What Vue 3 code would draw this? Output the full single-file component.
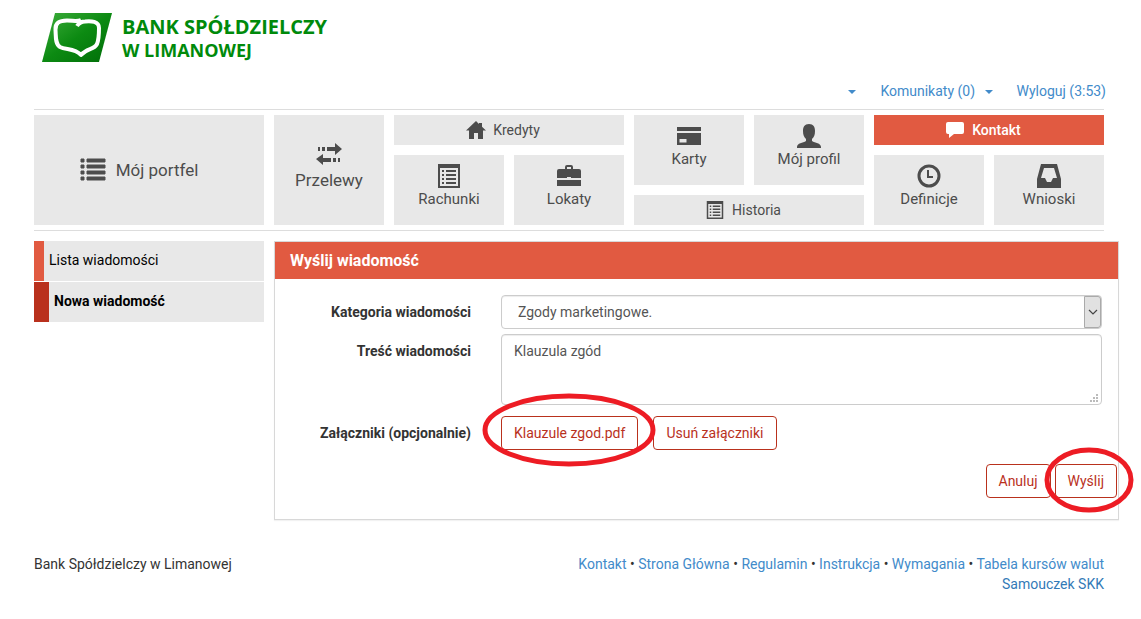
<script setup>
import { ref } from 'vue'

const category = ref('Zgody marketingowe.')
const message = ref('Klauzula zgód')

const tiles = [
  { label: 'Mój portfel', icon: 'list', kind: 'large', area: 'wallet' },
  { label: 'Przelewy', icon: 'transfer', kind: 'tall', area: 'transfers' },
  { label: 'Kredyty', icon: 'home', kind: 'wide', area: 'loans' },
  { label: 'Rachunki', icon: 'sheet', kind: 'small', area: 'accounts' },
  { label: 'Lokaty', icon: 'case', kind: 'small', area: 'deposits' },
  { label: 'Karty', icon: 'card', kind: 'small', area: 'cards' },
  { label: 'Mój profil', icon: 'user', kind: 'small', area: 'profile' },
  { label: 'Historia', icon: 'sheet', kind: 'wide', area: 'history' },
  { label: 'Kontakt', icon: 'comment', kind: 'wide', area: 'contact', active: true },
  { label: 'Definicje', icon: 'clock', kind: 'small', area: 'definitions' },
  { label: 'Wnioski', icon: 'inbox', kind: 'small', area: 'requests' }
]

const footerLinks = ['Kontakt', 'Strona Główna', 'Regulamin', 'Instrukcja', 'Wymagania', 'Tabela kursów walut']
</script>

<template>
  <div class="page">
    <header>
      <a class="logo" href="#">
        <svg class="logo-mark" viewBox="0 0 70 49" aria-hidden="true">
          <defs>
            <linearGradient id="leaf" x1="0" y1="0" x2="1" y2="1">
              <stop offset="0" stop-color="#3fae3c" />
              <stop offset="0.5" stop-color="#0c8a12" />
              <stop offset="1" stop-color="#006d08" />
            </linearGradient>
          </defs>
          <path d="M13 0H70L57 49H0Z" fill="url(#leaf)" />
          <path d="M39 7C35 9 31 7.500 25 7.500C17 7.500 13 10 13.500 17C14 23 13 31 18 34C24 37 33 35 39 42C45 35 52 37 55 31C57 26 57 20 57 15C57 8 49 8 43 8.500C39 8.500 37 10 35 13" fill="none" stroke="#fff" stroke-width="4" stroke-linejoin="round" />
        </svg>
        <span class="logo-text">
          <span class="logo-top">BANK SPÓŁDZIELCZY</span>
          <span class="logo-bottom">W LIMANOWEJ</span>
        </span>
      </a>
      <nav class="session">
        <a href="#" aria-label="Konto"><i class="caret"></i></a>
        <a href="#">Komunikaty (0) <i class="caret"></i></a>
        <a href="#">Wyloguj (3:53)</a>
      </nav>
    </header>

    <nav class="tiles">
      <a v-for="t in tiles" :key="t.label" href="#" class="tile" :class="[t.kind, t.area, { active: t.active }]">
        <svg v-if="t.icon === 'list'" class="icon" viewBox="0 0 26 24">
          <path d="M1 1h3v3H1zM1 7h3v3H1zM1 13h3v3H1zM1 19h3v3H1zM7 1h18v3H7zM7 7h18v3H7zM7 13h18v3H7zM7 19h18v3H7z" stroke="currentColor" stroke-width="1" stroke-linejoin="round" />
        </svg>
        <svg v-else-if="t.icon === 'transfer'" class="icon" viewBox="0 0 26 24">
          <path d="M2 5h2v4H2zM6 5h3v4H6zM11 5h8V1l7 6-7 6V9h-8zM7 12v4h8v4H7v3L0 17zM17 16h3v4h-3zM22 16h2v4h-2z" />
        </svg>
        <svg v-else-if="t.icon === 'home'" class="icon" viewBox="0 0 20 18">
          <path d="M10 0L0 9.500H3V18H8V12H12V18H17V9.500H20L16 5.700V2H13V3Z" />
        </svg>
        <svg v-else-if="t.icon === 'card'" class="icon" viewBox="0 0 24 24">
          <path d="M0 3h24v4H0zM0 9h24v12H0zM2.500 15v3.500h7V15z" fill-rule="evenodd" />
        </svg>
        <svg v-else-if="t.icon === 'user'" class="icon" viewBox="0 0 24 24">
          <path d="M12 0C7.500 0 6 3 6 7c0 4 1 6 3 8v2C6 19 0 19 0 23v1h24v-1c0-4-6-4-9-6v-2c2-2 3-4 3-8 0-4-1.500-7-6-7Z" />
        </svg>
        <svg v-else-if="t.icon === 'comment'" class="icon" viewBox="0 0 20 18">
          <path d="M3 1h14q2 0 2 2v8q0 2-2 2H9l-5 4v-4H3q-2 0-2-2V3q0-2 2-2Z" />
        </svg>
        <svg v-else-if="t.icon === 'sheet'" class="icon" viewBox="0 0 22 24">
          <path d="M0 0h22v24H0zM2 4v18h18V4z" fill-rule="evenodd" />
          <path d="M4 6h2v2H4zM4 10h2v2H4zM4 14h2v2H4zM4 18h2v2H4zM8 6h10v2H8zM8 10h10v2H8zM8 14h10v2H8zM8 18h10v2H8z" />
        </svg>
        <svg v-else-if="t.icon === 'case'" class="icon" viewBox="0 0 24 24">
          <path d="M8 5V3q0-2 2-2h4q2 0 2 2v2h6q2 0 2 2v7H14v-1h-4v1H0V7q0-2 2-2ZM10 5h4V3h-4ZM0 16h24v6H0z" fill-rule="evenodd" />
        </svg>
        <svg v-else-if="t.icon === 'clock'" class="icon" viewBox="0 0 24 24">
          <circle cx="12" cy="12" r="10" fill="none" stroke="currentColor" stroke-width="3" />
          <path d="M10 6h2v6h4v2h-6z" />
        </svg>
        <svg v-else class="icon" viewBox="0 0 24 24">
          <path d="M4 0h16l4 15v9H0v-9ZM7 4L4 14h4l2 4h4l2-4h4L17 4Z" fill-rule="evenodd" />
        </svg>
        <span>{{ t.label }}</span>
      </a>
    </nav>

    <div class="main">
      <nav class="side">
        <a href="#">Lista wiadomości</a>
        <a href="#" class="current">Nowa wiadomość</a>
      </nav>

      <section class="panel">
        <h1>Wyślij wiadomość</h1>
        <form @submit.prevent>
          <div class="row">
            <label for="category">Kategoria wiadomości</label>
            <div class="field">
              <select id="category" v-model="category" class="control">
                <option>Zgody marketingowe.</option>
              </select>
              <span class="drop" aria-hidden="true">
                <svg viewBox="0 0 10 6"><path d="M1 1l4 4 4-4" fill="none" stroke="#444" stroke-width="1.200" /></svg>
              </span>
            </div>
          </div>
          <div class="row">
            <label for="message">Treść wiadomości</label>
            <div class="field">
              <textarea id="message" v-model="message" class="control"></textarea>
              <svg class="grip" viewBox="0 0 8 8" aria-hidden="true">
                <path d="M6 0h2v2H6zM3 3h2v2H3zM6 3h2v2H6zM0 6h2v2H0zM3 6h2v2H3zM6 6h2v2H6z" />
              </svg>
            </div>
          </div>
          <div class="row files">
            <label for="attachment">Załączniki (opcjonalnie)</label>
            <div class="buttons">
              <span class="marked">
                <button id="attachment" type="button">Klauzule zgod.pdf</button>
                <svg class="ring ring-file" viewBox="0 0 174 74" aria-hidden="true"><ellipse cx="87" cy="37" rx="84" ry="34" /></svg>
              </span>
              <button type="button">Usuń załączniki</button>
            </div>
          </div>
          <div class="actions">
            <button type="button">Anuluj</button>
            <span class="marked">
              <button type="submit">Wyślij</button>
              <svg class="ring ring-send" viewBox="0 0 90 66" aria-hidden="true"><ellipse cx="45" cy="33" rx="42" ry="30" /></svg>
            </span>
          </div>
        </form>
      </section>
    </div>

    <footer>
      <span>Bank Spółdzielczy w Limanowej</span>
      <div class="links">
        <div><template v-for="(l, i) in footerLinks" :key="l"><template v-if="i"> • </template><a href="#">{{ l }}</a></template></div>
        <a href="#" class="guide">Samouczek SKK</a>
      </div>
    </footer>
  </div>
</template>

<style>
body { background: #fff; }
</style>

<style scoped>
* { box-sizing: border-box; }
.page {
  padding: 13px 37px 24px 34px;
  font: 14px/20px Roboto, "Liberation Sans", sans-serif;
  color: #333;
}
a { color: #428bca; text-decoration: none; }

.logo { display: inline-flex; margin-left: 8px; gap: 10px; color: #008a0b; vertical-align: top; }
.logo-mark { width: 70px; height: 49px; }
.logo-text { display: flex; flex-direction: column; font-family: "Open Sans", sans-serif; font-weight: 700; }
.logo-top { font-size: 20px; line-height: 28px; }
.logo-bottom { font-size: 18px; line-height: 18px; }
.session { display: flex; justify-content: flex-end; gap: 24px; margin: 19px -2px 0 0; height: 28px; }
.caret { display: inline-block; margin-left: 6px; border: 4px solid transparent; border-top-color: currentColor; border-bottom: 0; vertical-align: middle; }

.tiles {
  display: grid;
  grid-template-columns: repeat(9, 1fr);
  grid-template-rows: repeat(3, 30px);
  grid-template-areas:
    "wallet wallet transfers loans loans cards profile contact contact"
    "wallet wallet transfers accounts deposits cards profile definitions requests"
    "wallet wallet transfers accounts deposits history history definitions requests";
  gap: 10px;
  padding: 5px 0;
  border-top: 1px solid #ddd;
  border-bottom: 1px solid #ddd;
}
.tile { display: flex; align-items: center; min-width: 0; background: #e8e8e8; color: #4c4c4c; }
.icon { width: 24px; height: 24px; fill: currentColor; }
.large { justify-content: center; gap: 10px; padding-right: 20px; font-size: 17px; }
.large .icon { width: 26px; }
.tall { flex-direction: column; justify-content: center; padding-bottom: 8px; font-size: 17px; }
.tall .icon { width: 26px; }
.tall span { padding-top: 4px; }
.wide { justify-content: center; gap: 7px; padding-right: 12px; }
.wide .icon { width: 20px; height: 18px; }
.small { flex-direction: column; gap: 1px; padding-top: 9px; font-size: 15px; }
.wallet { grid-area: wallet; }
.transfers { grid-area: transfers; }
.loans { grid-area: loans; }
.accounts { grid-area: accounts; }
.deposits { grid-area: deposits; }
.cards { grid-area: cards; }
.profile { grid-area: profile; }
.history { grid-area: history; }
.contact { grid-area: contact; }
.definitions { grid-area: definitions; }
.requests { grid-area: requests; }
.active { background: #e15a41; color: #fff; font-weight: 500; }

.main { display: grid; grid-template-columns: 230px 1fr; gap: 10px; margin: 10px -15px 0 0; }
.side { display: flex; flex-direction: column; gap: 1px; }
.side a { height: 40px; padding: 9px 5px; border-left: 10px solid #e15a41; background: #e8e8e8; color: #000; }
.side .current { border-left: 15px solid #b9311d; font-weight: 700; }

.panel { border: 1px solid #d8d8d8; box-shadow: 0 1px 1px rgba(0, 0, 0, 0.05); }
h1 { margin: 0; padding: 9px 15px 8px; background: #e15a41; color: #fff; font-size: 16px; line-height: 20px; font-weight: 700; }
form { padding: 16px 16px 21px; }
.row { display: grid; grid-template-columns: 180px 1fr; gap: 30px; margin-bottom: 5px; }
label { padding-top: 7px; text-align: right; font-weight: 700; }
.field { position: relative; display: flex; }
.control { width: 100%; height: 34px; margin: 0; padding: 6px 16px; border: 1px solid #ccc; border-radius: 4px; background: #fff; box-shadow: inset 0 1px 1px rgba(0, 0, 0, 0.075); color: #555; font: inherit; appearance: none; }
textarea.control { height: 71px; padding: 6px 12px; resize: none; }
.drop { position: absolute; top: 1px; right: 1px; bottom: 1px; width: 17px; display: flex; align-items: center; justify-content: center; border: 1px solid #aaa; border-radius: 0 3px 3px 0; background: #e1e1e1; pointer-events: none; }
.drop svg { width: 10px; height: 6px; }
.grip { position: absolute; right: 4px; bottom: 3px; width: 8px; height: 8px; fill: #bbb; }
.files { margin-top: 11px; }
.buttons { display: flex; gap: 15px; }
button { height: 34px; padding: 6px 12px; border: 1px solid #b9311d; border-radius: 4px; background: #fff; color: #b9311d; font: inherit; }
.actions { display: flex; justify-content: flex-end; gap: 4px; margin: 14px -15px 0 0; }
.marked { position: relative; display: flex; }
.ring { position: absolute; fill: none; stroke: #ed1c24; stroke-width: 5; pointer-events: none; z-index: 1; }
.ring-file { left: -19px; top: -23px; width: 174px; height: 74px; }
.ring-send { left: -11px; top: -17px; width: 90px; height: 66px; }

footer { display: flex; justify-content: space-between; margin-top: 34px; }
.links { text-align: right; }
.guide { color: #337ab7; }
</style>
